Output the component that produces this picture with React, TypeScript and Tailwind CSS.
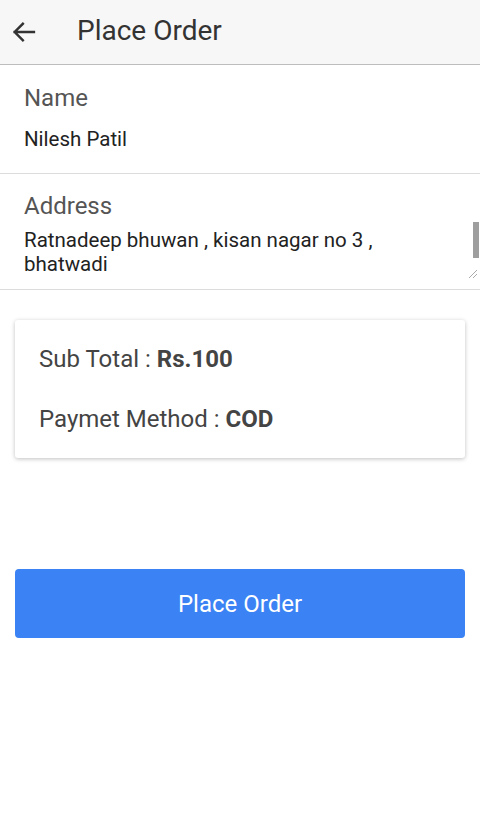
import React from "react";

export default function App() {
  return (
    <div className="w-[480px] h-[815px] bg-white" style={{ fontFamily: "Roboto, 'Liberation Sans', sans-serif" }}>
      {/* Header */}
      <div className="h-[65px] bg-[#f7f7f7] border-b border-[#bdbdbd] flex items-center">
        <div className="w-[48px] flex justify-center items-center">
          <svg width="28" height="28" viewBox="0 0 24 24">
            <path d="M20.5 12H4M11 5l-7 7 7 7" fill="none" stroke="#333" strokeWidth="2.1" strokeLinecap="square" />
          </svg>
        </div>
        <div className="ml-[29px] text-[28px] leading-[32px] text-[#333] -mt-[2px]">Place Order</div>
      </div>

      {/* Name */}
      <div className="border-b border-[#dcdcdc] pl-[24px] pt-[19px] pb-[22px]">
        <div className="text-[24px] leading-[28px] text-[#555]">Name</div>
        <div className="mt-[15px] text-[20.5px] leading-[24px] text-[#222]">Nilesh Patil</div>
      </div>

      {/* Address */}
      <div className="border-b border-[#dcdcdc] pt-[18px]">
        <div className="pl-[24px] text-[24px] leading-[28px] text-[#555]">Address</div>
        <div className="relative h-[71px] mt-[-2px]">
          <div className="pl-[24px] pt-[10px] pr-[40px] text-[20.5px] leading-[24px] text-[#222]">
            Ratnadeep bhuwan , kisan nagar no 3 , bhatwadi
          </div>
          <div className="absolute right-[1px] top-[4px] w-[6px] h-[36px] bg-[#9e9e9e]" />
          <svg className="absolute right-[2px] bottom-[10px]" width="10" height="10" viewBox="0 0 10 10">
            <path d="M1 9L9 1M5 9L9 5" stroke="#aaa" strokeWidth="1" />
          </svg>
        </div>
      </div>

      {/* Card */}
      <div className="mx-[15px] mt-[30px] rounded-[3px] bg-white shadow-[0_1px_4px_rgba(0,0,0,0.25)] px-[24px] pt-[25px] pb-[25px]">
        <div className="text-[24px] leading-[28px] text-[#444]">
          Sub Total : <span className="font-bold">Rs.100</span>
        </div>
        <div className="mt-[32px] text-[24px] leading-[28px] text-[#444]">
          Paymet Method : <span className="font-bold">COD</span>
        </div>
      </div>

      {/* Button */}
      <div className="mx-[15px] mt-[111px]">
        <button className="w-full h-[69px] rounded-[4px] bg-[#3b82f4] text-white text-[24px] leading-[28px] flex items-center justify-center">
          Place Order
        </button>
      </div>
    </div>
  );
}
